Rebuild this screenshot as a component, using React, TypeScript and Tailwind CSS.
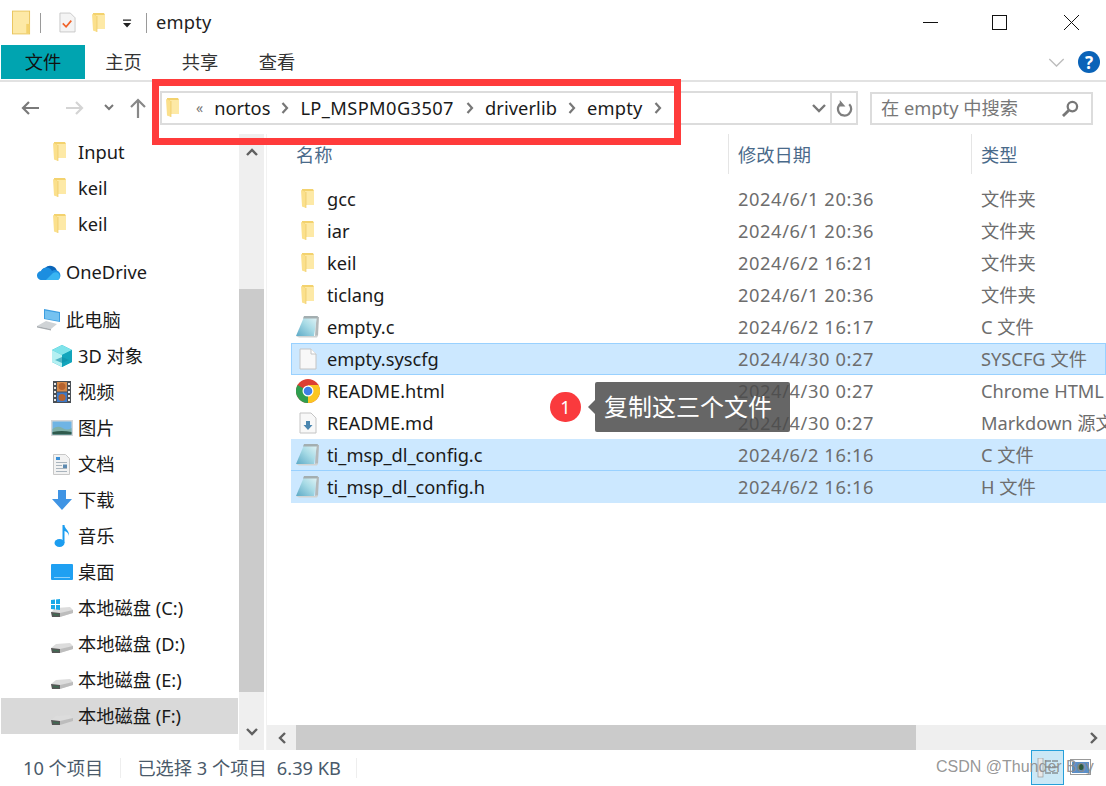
import { ReactNode } from 'react';

const FONT = "font-['Noto_Sans','Noto_Sans_CJK_SC',sans-serif]";

function Folder({ className = 'w-[14px] h-[20px]' }: { className?: string }) {
  return (
    <svg viewBox="0 0 14 20" className={className}>
      <path d="M1 0h11l1 2v14H1z" fill="#f3d26e" />
      <path d="M4 2h9v14H4z" fill="#fde9a6" />
      <path d="M0 1l5 2v16l-4 -1.500z" fill="#fbe08c" />
      <path d="M5 3v16" stroke="#e9c45c" strokeWidth="0.6" />
    </svg>
  );
}

function Notepad({ id }: { id: string }) {
  return (
    <svg viewBox="0 0 24 24" className="w-[24px] h-[24px]">
      <defs>
        <linearGradient id={id} x1="0" y1="1" x2="1" y2="0">
          <stop offset="0" stopColor="#5ca9c6" />
          <stop offset="0.55" stopColor="#a8dbe6" />
          <stop offset="1" stopColor="#e4f4f6" />
        </linearGradient>
      </defs>
      <path d="M20 2h3l-1 19-3 1z" fill="#b4b9ba" />
      <path d="M8 2h13l-3 19H0z" fill={`url(#${id})`} />
      <path d="M8 1h14l-1 2.500H7z" fill="#a3aeb0" />
      <path d="M0 21h18l4-1-1 2.500H3z" fill="#d0d3d3" />
    </svg>
  );
}

function BlankFile() {
  return (
    <svg viewBox="0 0 18 22" className="w-[18px] h-[22px]">
      <path d="M1 1h11l5 5v15H1z" fill="#f8f8f8" stroke="#c4c4c4" />
      <path d="M12 1v5h5" fill="#fff" stroke="#c4c4c4" />
    </svg>
  );
}

function MdFile() {
  return (
    <svg viewBox="0 0 18 22" className="w-[18px] h-[22px]">
      <path d="M1 1h11l5 5v15H1z" fill="#f8f8f8" stroke="#c4c4c4" />
      <path d="M7 9h4v4h2.500L9 18l-4.500-5H7z" fill="#4b87b0" />
    </svg>
  );
}

function Chrome() {
  return (
    <svg viewBox="0 0 24 24" className="w-[24px] h-[24px]">
      <circle cx="12" cy="12" r="12" fill="#dd3f33" />
      <path d="M12 12L1.600 6A12 12 0 0 0 12 24z" fill="#2f9e4f" />
      <path d="M12 12v12A12 12 0 0 0 22.400 6H12z" fill="#fbc622" />
      <circle cx="12" cy="12" r="5.500" fill="#fff" />
      <circle cx="12" cy="12" r="4.300" fill="#3f7fe6" />
    </svg>
  );
}

function Drive({ win }: { win?: boolean }) {
  return (
    <svg viewBox="0 0 24 20" className="w-[24px] h-[20px]">
      <path d="M1 14l5-4 14-1 3 3v3L9 19H2z" fill="#dcdcdc" />
      <path d="M1 14l9 1v4H2z" fill="#565656" />
      <path d="M3 15.500l6 .7v1.500l-6-.4z" fill="#3f6a52" />
      <path d="M10 15l13-3v3l-13 4z" fill="#bdbdbd" />
      {win && (
        <g fill="#19a8e8">
          <path d="M1 2l4-.5V6H1zM6 1.400L10 1v5H6zM1 7h4v4.500L1 11zM6 7h4v5l-4-.5z" />
        </g>
      )}
    </svg>
  );
}

const navIcons: Record<string, ReactNode> = {
  cube: (
    <svg viewBox="0 0 22 22" className="w-[22px] h-[22px]">
      <path d="M11 0l10 5v12l-10 5L1 17V5z" fill="#1fb6cb" />
      <path d="M11 0l10 5-10 5L1 5z" fill="#7fe3ea" />
      <path d="M1 5l10 5v12L1 17z" fill="#b4f0f2" />
      <path d="M11 10l10-5v12l-10 5z" fill="#12a5bc" />
      <path d="M4 15l7-3 7 3-7 3z" fill="#0d8ea6" opacity="0.6" />
    </svg>
  ),
  video: (
    <svg viewBox="0 0 18 22" className="w-[18px] h-[22px]">
      <rect width="18" height="22" fill="#4a4f55" />
      <rect x="4" y="1" width="10" height="9.500" fill="#d58a4a" />
      <rect x="4" y="11.500" width="10" height="9.500" fill="#3d79c8" />
      <path d="M9 2a3 3 0 0 1 0 7 3 3 0 0 1 0-7zM9 13a3 3 0 0 1 0 7 3 3 0 0 1 0-7z" fill="#b5632f" />
      <g fill="#e6e6e6">
        <path d="M1 2h2v2H1zM1 6h2v2H1zM1 10h2v2H1zM1 14h2v2H1zM1 18h2v2H1zM15 2h2v2h-2zM15 6h2v2h-2zM15 10h2v2h-2zM15 14h2v2h-2zM15 18h2v2h-2z" />
      </g>
    </svg>
  ),
  picture: (
    <svg viewBox="0 0 22 16" className="w-[22px] h-[16px]">
      <rect width="22" height="16" fill="#d4d6d8" />
      <rect x="1.500" y="1.500" width="19" height="13" fill="#6fb4e4" />
      <path d="M1.500 9q5-4 10-1t9 0v6.500h-19z" fill="#7fb0a8" />
      <path d="M1.500 12q9-2 19 0v2.500h-19z" fill="#2f5a4c" />
    </svg>
  ),
  doc: (
    <svg viewBox="0 0 17 21" className="w-[17px] h-[21px]">
      <path d="M0.500 0.500h12l4 4v16h-16z" fill="#f2f2f2" stroke="#c8c8c8" />
      <path d="M3 3h4v3H3z" fill="#3a8fd6" />
      <path d="M3 8h11v1H3zM3 11h6v1H3zM3 14h11v1H3zM3 17h11v1H3z" fill="#a9b4bd" />
      <path d="M10 10.500h4V14h-4z" fill="#5d8ab0" />
    </svg>
  ),
  download: (
    <svg viewBox="0 0 20 20" className="w-[20px] h-[20px]">
      <path d="M6 0h8v9h6L10 20 0 9h6z" fill="#3f94e4" />
    </svg>
  ),
  music: (
    <svg viewBox="0 0 16 22" className="w-[16px] h-[22px]">
      <ellipse cx="5.500" cy="18" rx="5" ry="4" fill="#1c9df0" />
      <path d="M8.500 0h2c0 4 5 5 4.500 11-.3-3-3-4.500-4.500-5v12h-2z" fill="#1c9df0" />
    </svg>
  ),
  desktop: (
    <svg viewBox="0 0 22 16" className="w-[22px] h-[16px]">
      <rect width="22" height="16" rx="1" fill="#1fa0f2" />
      <path d="M3 13h16v1H3z" fill="#8bd0fb" />
    </svg>
  ),
  cloud: (
    <svg viewBox="0 0 25 16" className="w-[25px] h-[16px]">
      <path d="M5 12a5 5 0 0 1 3-8 7 7 0 0 1 12 3z" fill="#0a64b8" />
      <path d="M5 16a4.500 4.500 0 0 1-1-9 6 6 0 0 1 11 0 4.500 4.500 0 0 1 6 9z" fill="#1c8ee0" />
      <path d="M9 16l7-7a4 4 0 0 1 5 7z" fill="#39b5f2" />
    </svg>
  ),
  pc: (
    <svg viewBox="0 0 24 22" className="w-[24px] h-[22px]">
      <path d="M7 0l16 3v10L7 10z" fill="#3d9ee0" />
      <path d="M8 1.500l14 2.500v8L8 9.500z" fill="#75c2f0" />
      <path d="M0 17l9-5 11 3-6 5z" fill="#cfd3d6" />
      <path d="M0 17l14 3v1.500L0 18.500z" fill="#a6abaf" />
    </svg>
  ),
};

type NavItem = { label: string; icon: ReactNode; indent: boolean; gap?: boolean; active?: boolean };

const navFolder = (
  <span className="-ml-[4px]">
    <Folder />
  </span>
);

const navItems: NavItem[] = [
  { label: 'Input', icon: navFolder, indent: true },
  { label: 'keil', icon: navFolder, indent: true },
  { label: 'keil', icon: navFolder, indent: true },
  { label: 'OneDrive', icon: navIcons.cloud, indent: false, gap: true },
  { label: '此电脑', icon: navIcons.pc, indent: false, gap: true },
  { label: '3D 对象', icon: navIcons.cube, indent: true },
  { label: '视频', icon: navIcons.video, indent: true },
  { label: '图片', icon: navIcons.picture, indent: true },
  { label: '文档', icon: navIcons.doc, indent: true },
  { label: '下载', icon: navIcons.download, indent: true },
  { label: '音乐', icon: navIcons.music, indent: true },
  { label: '桌面', icon: navIcons.desktop, indent: true },
  { label: '本地磁盘 (C:)', icon: <Drive win />, indent: true },
  { label: '本地磁盘 (D:)', icon: <Drive />, indent: true },
  { label: '本地磁盘 (E:)', icon: <Drive />, indent: true },
  { label: '本地磁盘 (F:)', icon: <Drive />, indent: true, active: true },
];

type FileRow = { name: string; date: string; type: string; icon: ReactNode; selected?: 'border' | 'fill' };

const files: FileRow[] = [
  { name: 'gcc', date: '2024/6/1 20:36', type: '文件夹', icon: <Folder /> },
  { name: 'iar', date: '2024/6/1 20:36', type: '文件夹', icon: <Folder /> },
  { name: 'keil', date: '2024/6/2 16:21', type: '文件夹', icon: <Folder /> },
  { name: 'ticlang', date: '2024/6/1 20:36', type: '文件夹', icon: <Folder /> },
  { name: 'empty.c', date: '2024/6/2 16:17', type: 'C 文件', icon: <Notepad id="pad-a" /> },
  { name: 'empty.syscfg', date: '2024/4/30 0:27', type: 'SYSCFG 文件', icon: <BlankFile />, selected: 'border' },
  { name: 'README.html', date: '2024/4/30 0:27', type: 'Chrome HTML Document', icon: <Chrome /> },
  { name: 'README.md', date: '2024/4/30 0:27', type: 'Markdown 源文件', icon: <MdFile /> },
  { name: 'ti_msp_dl_config.c', date: '2024/6/2 16:16', type: 'C 文件', icon: <Notepad id="pad-b" />, selected: 'fill' },
  { name: 'ti_msp_dl_config.h', date: '2024/6/2 16:16', type: 'H 文件', icon: <Notepad id="pad-c" />, selected: 'fill' },
];

function Crumb({ label, className = '' }: { label: string; className?: string }) {
  return (
    <>
      <span className={`text-[#1a1a1a] ${className}`}>{label}</span>
      <svg viewBox="0 0 8 12" className="w-[8px] h-[12px] mx-[11px] shrink-0">
        <path d="M1.500 1l4.500 5-4.500 5" fill="none" stroke="#777" strokeWidth="2.200" />
      </svg>
    </>
  );
}

function Chevron({ d }: { d: string }) {
  return (
    <svg viewBox="0 0 12 12" className="w-[12px] h-[12px]">
      <path d={d} fill="none" stroke="#606060" strokeWidth="2.400" />
    </svg>
  );
}

export default function App() {
  return (
    <div className={`${FONT} relative w-[1106px] h-[786px] overflow-hidden bg-white text-[18.25px] leading-none text-[#1a1a1a]`}>
      {/* title bar */}
      <div className="flex h-[45px] items-center pl-[12px]">
        <svg viewBox="0 0 20 25" className="w-[19px] h-[25px]">
          <rect x="0.500" y="0.500" width="18" height="24" fill="#fde9a6" stroke="#e9c45c" />
          <rect x="15" y="14" width="3.500" height="10" fill="#f3d26e" />
        </svg>
        <div className="ml-[9px] h-[20px] w-px bg-[#9a9a9a]" />
        <svg viewBox="0 0 18 22" className="ml-[18px] w-[17px] h-[21px]">
          <path d="M1 1h11l5 5v15H1z" fill="#f4f4f4" stroke="#c8c8c8" />
          <path d="M4 12l3.500 3.500L13 9" fill="none" stroke="#f0632a" strokeWidth="1.800" />
        </svg>
        <div className="ml-[16px]"><Folder /></div>
        <svg viewBox="0 0 10 10" className="ml-[17px] mt-[3px] w-[9px] h-[10px]">
          <path d="M0 0h9v1.500H0zM0 4h9L4.500 9z" fill="#222" />
        </svg>
        <div className="ml-[14px] h-[20px] w-px bg-[#9a9a9a]" />
        <span className="ml-[9px] text-[#222] -mt-[1px] tracking-[0.2px]">empty</span>
        <div className="ml-auto flex items-center">
          <svg viewBox="0 0 15 15" className="w-[15px] h-[15px]">
            <path d="M0 7.500h15" stroke="#111" strokeWidth="1" />
          </svg>
          <svg viewBox="0 0 15 15" className="ml-[54px] w-[15px] h-[15px]">
            <rect x="0.500" y="0.500" width="14" height="14" fill="none" stroke="#111" />
          </svg>
          <svg viewBox="0 0 15 15" className="ml-[57px] mr-[27px] w-[15px] h-[15px]">
            <path d="M0 0l15 15M15 0L0 15" stroke="#111" strokeWidth="1" />
          </svg>
        </div>
      </div>

      {/* ribbon tabs */}
      <div className="flex h-[37px] items-start border-b-2 border-[#e2e2e2] pl-px">
        <div className="flex h-[34px] w-[84px] items-center justify-center bg-[#00a4b0] pt-[1px] text-[#111]">文件</div>
        <div className="flex h-[34px] w-[77px] items-center justify-center pt-[1px] text-[#333]">主页</div>
        <div className="flex h-[34px] w-[76px] items-center justify-center pt-[1px] text-[#333]">共享</div>
        <div className="flex h-[34px] w-[78px] items-center justify-center pt-[1px] text-[#333]">查看</div>
        <div className="ml-auto flex h-[34px] items-center pr-[6px]">
          <svg viewBox="0 0 18 10" className="w-[17px] h-[9px]">
            <path d="M1 1l8 8 8-8" fill="none" stroke="#bdbdbd" strokeWidth="1.500" />
          </svg>
          <div className="ml-[13px] flex h-[22px] w-[22px] items-center justify-center rounded-full bg-[#0a63b8] text-[17px] font-bold text-white">?</div>
        </div>
      </div>

      {/* address row */}
      <div className="flex h-[52px] items-center">
        <div className="flex w-[160px] shrink-0 items-center pl-[20px]">
          <svg viewBox="0 0 20 16" className="w-[20px] h-[16px]">
            <path d="M19 8H3M9 2L3 8l6 6" fill="none" stroke="#7a7a7a" strokeWidth="2.200" />
          </svg>
          <svg viewBox="0 0 20 16" className="ml-[25px] w-[20px] h-[16px]">
            <path d="M1 8h16M11 2l6 6-6 6" fill="none" stroke="#d4d4d4" strokeWidth="2.200" />
          </svg>
          <svg viewBox="0 0 10 8" className="ml-[19px] w-[10px] h-[8px]">
            <path d="M1 1l4 4 4-4" fill="none" stroke="#777" strokeWidth="2" />
          </svg>
          <svg viewBox="0 0 16 20" className="ml-[16px] w-[16px] h-[20px]">
            <path d="M8 20V3M1 9l7-7 7 7" fill="none" stroke="#888" strokeWidth="2.200" />
          </svg>
        </div>
        <div className="flex h-[34px] w-[698px] items-center border-2 border-[#dcdcdc] pl-[4px]">
          <Folder />
          <span className="ml-[16px] mr-[11px] text-[14px] text-[#777]">«</span>
          <Crumb label="nortos" />
          <Crumb label="LP_MSPM0G3507" className="mr-[1px] tracking-[0.4px]" />
          <Crumb label="driverlib" className="tracking-[0.1px]" />
          <Crumb label="empty" className="tracking-[0.2px]" />
          <svg viewBox="0 0 14 9" className="ml-auto mr-[4px] w-[14px] h-[9px]">
            <path d="M1 1l6 6 6-6" fill="none" stroke="#777" strokeWidth="2.400" />
          </svg>
          <div className="flex h-full w-[26px] items-center justify-center border-l-2 border-[#dcdcdc]">
            <svg viewBox="0 0 18 18" className="w-[17px] h-[17px]">
              <path d="M14 4.500A7 7 0 1 1 6 3.200" fill="none" stroke="#7e7e7e" strokeWidth="2.400" />
              <path d="M4 0v7h6z" fill="#7e7e7e" />
            </svg>
          </div>
        </div>
        <div className="ml-[12px] flex h-[33px] w-[223px] items-center border-2 border-[#dcdcdc] pl-[9px] pr-[12px] text-[#777]">
          在 empty 中搜索
          <svg viewBox="0 0 18 18" className="ml-auto w-[17px] h-[17px]">
            <circle cx="11" cy="7" r="5" fill="none" stroke="#777" strokeWidth="2.400" />
            <path d="M7 11l-6 6" stroke="#777" strokeWidth="3" />
          </svg>
        </div>
      </div>

      {/* body */}
      <div className="flex h-[616px]">
        {/* nav pane */}
        <div className="flex w-[239px] shrink-0 flex-col pl-px pr-px">
          {navItems.map((it, i) => (
            <div
              key={i}
              className={`flex h-[36px] shrink-0 items-center ${it.gap ? 'mt-[12px]' : ''} ${it.active ? 'bg-[#d9d9d9]' : ''} ${it.indent ? 'pl-[44px]' : 'pl-[31px]'}`}
            >
              <div className={`flex shrink-0 items-center justify-center ${it.indent ? 'w-[33px]' : 'w-[34px]'}`}>
                {it.icon}
              </div>
              <span className="whitespace-nowrap">{it.label}</span>
            </div>
          ))}
        </div>
        {/* nav scrollbar */}
        <div className="flex w-[25px] shrink-0 flex-col bg-[#efefef]">
          <div className="flex h-[36px] items-center justify-center"><Chevron d="M1 9l5-5 5 5" /></div>
          <div className="mt-[119px] h-[403px] bg-[#cbcbcb]" />
          <div className="mt-auto flex h-[36px] items-center justify-center"><Chevron d="M1 3l5 5 5-5" /></div>
        </div>
        <div className="ml-[2px] w-px bg-[#f2f2f2]" />

        {/* file list */}
        <div className="flex min-w-0 flex-1 flex-col">
          <div className="flex h-[40px] shrink-0 items-center text-[#4a6a8a]">
            <div className="w-[461px] pl-[29px] pt-[2px]">名称</div>
            <div className="h-full w-px bg-[#e5e5e5]" />
            <div className="w-[242px] pl-[9px] pt-[2px]">修改日期</div>
            <div className="h-full w-px bg-[#e5e5e5]" />
            <div className="pl-[9px] pt-[2px]">类型</div>
          </div>
          <div className="flex flex-1 flex-col overflow-hidden pl-[24px] pt-[9px]">
            {files.map((f) => (
              <div
                key={f.name}
                className={`flex h-[32px] shrink-0 items-center whitespace-nowrap ${
                  f.selected === 'border'
                    ? 'bg-[#cce8ff] shadow-[inset_0_0_0_1px_#99d1ff]'
                    : f.selected === 'fill'
                      ? 'bg-[#cce8ff] shadow-[inset_0_-1px_0_#99d1ff] last:shadow-none'
                      : ''
                }`}
              >
                <div className="flex w-[32px] shrink-0 justify-center pl-[2px]">{f.icon}</div>
                <div className="w-[415px] shrink-0 pl-[4px]">{f.name}</div>
                <div className="w-[243px] shrink-0 tracking-[0.6px] text-[#6d6d6d]">{f.date}</div>
                <div className="text-[#6d6d6d]">{f.type}</div>
              </div>
            ))}
          </div>
          <div className="flex h-[25px] shrink-0 items-center bg-[#efefef] pl-[3px]">
            <div className="flex w-[26px] shrink-0 justify-center"><Chevron d="M8 1L3 6l5 5" /></div>
            <div className="h-full w-[620px] bg-[#cbcbcb]" />
            <div className="ml-auto flex w-[26px] justify-center"><Chevron d="M4 1l5 5-5 5" /></div>
          </div>
        </div>
      </div>

      {/* status bar */}
      <div className="flex h-[36px] items-center text-[#4a5a6a]">
        <span className="ml-[23px]">10 个项目</span>
        <div className="ml-[17px] h-[20px] w-px bg-[#eeeeee]" />
        <span className="ml-[16px]">已选择 3 个项目</span>
        <span className="ml-[10px]">6.39 KB</span>
        <div className="ml-[15px] h-[20px] w-px bg-[#eeeeee]" />
      </div>

      {/* view toggles */}
      <div className="absolute left-[1031px] top-[750px] flex h-[35px] w-[33px] items-center justify-center border border-[#26a0da] bg-[#cbe8f6]">
        <svg viewBox="0 0 22 20" className="w-[22px] h-[20px]">
          <rect x="1" y="0" width="5" height="19" fill="#e8e8e8" stroke="#999" strokeWidth="0.700" />
          <path d="M8 3h6M15 3h6M8 9h6M15 9h6M8 15h6M15 15h6" stroke="#666" strokeWidth="1" />
        </svg>
      </div>
      <div className="absolute left-[1070px] top-[759px] flex h-[16px] w-[21px] items-center justify-center border border-[#999]">
        <div className="flex h-[11px] w-[17px] items-center justify-center bg-[#5b8fc8]">
          <div className="h-[6px] w-[6px] rounded-full bg-[#2f5a3c]" />
        </div>
      </div>

      {/* annotation overlays */}
      <div className="absolute left-[152px] top-[79px] h-[66px] w-[529px] border-[7px] border-[#ff3b3b]" />
      <div className="absolute left-[550px] top-[392px] flex h-[30px] w-[31px] items-center justify-center rounded-full bg-[#fa3a3d] text-[18px] text-white">1</div>
      <div className="absolute left-[595px] top-[382px] flex h-[50px] w-[195px] items-center rounded-[2px] bg-[#4b4b4b]/85 pl-[9px] text-[24px] text-white">
        <span className="absolute -left-[7px] top-[18px] h-0 w-0 border-y-[7px] border-r-[7px] border-y-transparent border-r-[#4b4b4b]/85" />
        复制这三个文件
      </div>
      <div className="absolute left-[936px] top-[759px] font-['Liberation_Sans',sans-serif] text-[16px] text-[#8a8a8a]/90">CSDN @Thunder Boy</div>
    </div>
  );
}
